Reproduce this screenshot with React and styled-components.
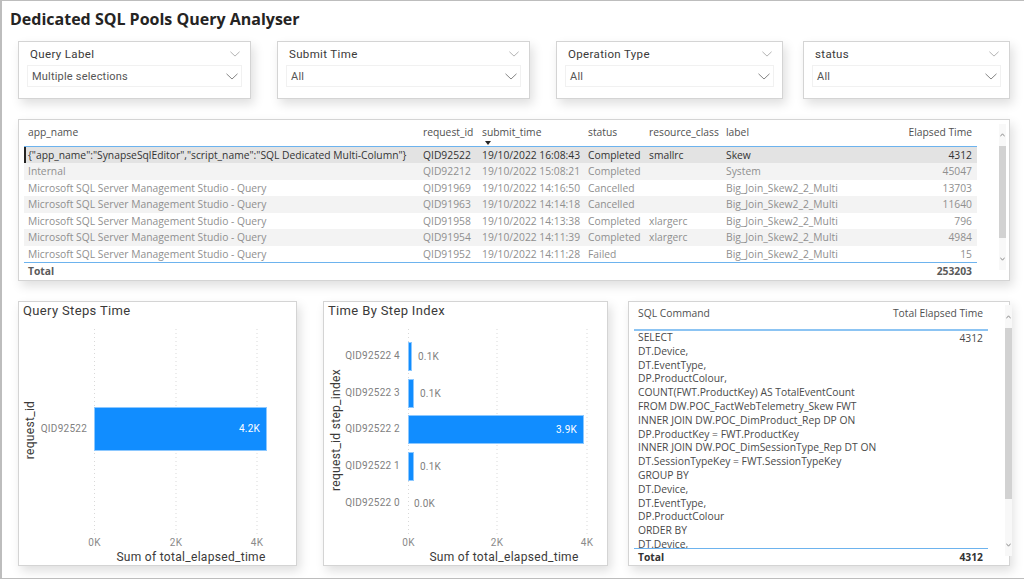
import React from 'react';
import styled, { createGlobalStyle } from 'styled-components';

const GlobalStyle = createGlobalStyle`
  html, body { margin: 0; padding: 0; background: #fff; }
  body { font-family: "Open Sans", "Liberation Sans", sans-serif; overflow: hidden; }
`;

const Page = styled.div`
  box-sizing: border-box;
  width: 1024px;
  height: 579px;
  background: #fff;
  border: 1px solid #bdbdbd;
  border-left-width: 2px;
  border-right: 0;
  padding-left: 16px;
  overflow: hidden;
`;

const Title = styled.h1`
  margin: 0 0 0 -8px;
  height: 40px;
  font-size: 16px;
  line-height: 36px;
  font-weight: 700;
  color: #252423;
`;

const Card = styled.div`
  box-sizing: border-box;
  background: #fff;
  border: 1px solid #d4d4d4;
  box-shadow: 3px 5px 10px rgba(0, 0, 0, 0.13);
`;

const SlicerRow = styled.div`
  display: flex;
  height: 78px;
`;

const SlicerCard = styled(Card)`
  width: ${p => p.$width}px;
  height: 58px;
  margin-right: ${p => p.$gap}px;
  padding: 0 8px;
`;

const SlicerHead = styled.div`
  display: flex;
  align-items: center;
  justify-content: space-between;
  height: 23px;
  padding: 0 2px 0 3px;
  font-family: Roboto, "Liberation Sans", sans-serif;
  font-size: 11.5px;
  letter-spacing: 0.35px;
  color: #3b3a39;
`;

const SlicerBox = styled.div`
  display: flex;
  align-items: center;
  justify-content: space-between;
  height: 22px;
  box-sizing: border-box;
  border: 1px solid #f1f1f1;
  padding: 0 3px 0 4px;
  font-family: Roboto, "Liberation Sans", sans-serif;
  font-size: 11px;
  letter-spacing: 0.2px;
  color: #555;
`;

const TableCard = styled(Card)`
  display: flex;
  width: 992px;
  height: 162px;
  padding-left: 5px;
`;

const TableMain = styled.div`
  width: 953px;
  flex: none;
`;

const DataRow = styled.div`
  display: grid;
  grid-template-columns: 395px 59px 106px 61px 77px 178px 77px;
  height: ${p => p.$h || 16.43}px;
  line-height: ${p => p.$h || 16.43}px;
  font-size: 10.3px;
  color: ${p => (p.$active ? '#333' : '#8f8f8f')};
  background: ${p => (p.$active ? '#e3e3e3' : p.$alt ? '#f3f3f3' : '#fff')};
  box-shadow: ${p => (p.$active ? 'inset 2px 0 0 #252423' : 'none')};
  white-space: nowrap;
`;

const HeadRow = styled(DataRow)`
  color: #505050;
  background: #fff;
  border-bottom: 1px solid #6db3ee;
  box-sizing: content-box;
  line-height: 25px;
`;

const TotalRow = styled(DataRow)`
  border-top: 1px solid #6db3ee;
  box-sizing: content-box;
  font-weight: 700;
  color: #5a5a5a;
`;

const Cell = styled.div`
  position: relative;
  padding: 0 ${p => (p.$right ? 5 : 0)}px 0 4px;
  text-align: ${p => (p.$right ? 'right' : 'left')};
`;

const SortCaret = styled.span`
  position: absolute;
  left: 7px;
  top: 21px;
  border: 3px solid transparent;
  border-top: 4px solid #252423;
  border-bottom: 0;
`;

const ScrollTrack = styled.div`
  display: flex;
  flex-direction: column;
  width: 7px;
  flex: none;
  margin: ${p => p.$top}px 0 0 ${p => p.$left}px;
  height: ${p => p.$height}px;
  background: #f8f8f8;
`;

const ScrollArrow = styled.div`
  display: flex;
  align-items: center;
  justify-content: center;
  height: ${p => p.$h}px;
  flex: none;
`;

const ScrollThumb = styled.div`
  height: ${p => p.$h}px;
  background: #d2d2d2;
  flex: none;
`;

const ScrollRest = styled.div`
  flex: 1;
`;

const BottomRow = styled.div`
  display: flex;
  margin-top: 20px;
`;

const ChartCard = styled(Card)`
  width: ${p => p.$width}px;
  height: 265px;
  margin-right: ${p => p.$gap}px;
`;

const ChartSvg = styled.svg`
  display: block;
  text {
    font-family: Roboto, "Liberation Sans", sans-serif;
  }
`;

const SqlCard = styled(Card)`
  display: flex;
  width: 382px;
  height: 265px;
  padding-left: 5px;
`;

const SqlMain = styled.div`
  width: 354px;
  flex: none;
`;

const SqlRow = styled.div`
  display: flex;
  justify-content: space-between;
  padding: 0 5px 0 4px;
  font-size: 10.3px;
  line-height: ${p => p.$lh}px;
  height: ${p => p.$h}px;
  color: ${p => p.$color};
  font-weight: ${p => (p.$bold ? 700 : 400)};
  border-top: ${p => (p.$topLine ? '1px solid #6db3ee' : '0')};
  border-bottom: ${p => (p.$bottomLine ? '2px solid #8cc4f3' : '0')};
  overflow: hidden;
`;

const SqlLines = styled.div`
  white-space: pre;
  line-height: 13.8px;
`;

const Chevron = ({ w = 11, color = '#777' }) => (
  <svg width={w} height={w / 2 + 1} viewBox="0 0 12 7" fill="none">
    <path d="M0.5 0.8 L6 6 L11.5 0.8" stroke={color} strokeWidth="0.9" />
  </svg>
);

const ArrowGlyph = ({ up }) => (
  <svg width="5" height="4" viewBox="0 0 5 4" fill="none">
    <path d={up ? 'M0.3 3.4 L2.5 0.8 L4.7 3.4' : 'M0.3 0.6 L2.5 3.2 L4.7 0.6'} stroke="#777" strokeWidth="0.8" />
  </svg>
);

const Scrollbar = ({ top, left, height, arrow, thumb }) => (
  <ScrollTrack $top={top} $left={left} $height={height}>
    <ScrollArrow $h={arrow}><ArrowGlyph up /></ScrollArrow>
    <ScrollThumb $h={thumb} />
    <ScrollRest />
    <ScrollArrow $h={22}><ArrowGlyph /></ScrollArrow>
  </ScrollTrack>
);

const slicers = [
  { label: 'Query Label', value: 'Multiple selections', width: 233, gap: 26 },
  { label: 'Submit Time', value: 'All', width: 253, gap: 26 },
  { label: 'Operation Type', value: 'All', width: 227, gap: 20 },
  { label: 'status', value: 'All', width: 207, gap: 0 },
];

const columns = ['app_name', 'request_id', 'submit_time', 'status', 'resource_class', 'label', 'Elapsed Time'];
const mgmt = 'Microsoft SQL Server Management Studio - Query';
const bigJoin = 'Big_Join_Skew2_2_Multi';

const rows = [
  ['{"app_name":"SynapseSqlEditor","script_name":"SQL Dedicated Multi-Column"}', 'QID92522', '19/10/2022 16:08:43', 'Completed', 'smallrc', 'Skew', '4312'],
  ['Internal', 'QID92212', '19/10/2022 15:08:21', 'Completed', '', 'System', '45047'],
  [mgmt, 'QID91969', '19/10/2022 14:16:50', 'Cancelled', '', bigJoin, '13703'],
  [mgmt, 'QID91963', '19/10/2022 14:14:18', 'Cancelled', '', bigJoin, '11640'],
  [mgmt, 'QID91958', '19/10/2022 14:13:38', 'Completed', 'xlargerc', bigJoin, '796'],
  [mgmt, 'QID91954', '19/10/2022 14:11:39', 'Completed', 'xlargerc', bigJoin, '4984'],
  [mgmt, 'QID91952', '19/10/2022 14:11:28', 'Failed', '', bigJoin, '15'],
];

const sqlText = `SELECT
DT.Device,
DT.EventType,
DP.ProductColour,
COUNT(FWT.ProductKey) AS TotalEventCount
FROM DW.POC_FactWebTelemetry_Skew FWT
INNER JOIN DW.POC_DimProduct_Rep DP ON
DP.ProductKey = FWT.ProductKey
INNER JOIN DW.POC_DimSessionType_Rep DT ON
DT.SessionTypeKey = FWT.SessionTypeKey
GROUP BY
DT.Device,
DT.EventType,
DP.ProductColour
ORDER BY
DT.Device,`;

// chart coords are relative to the card's inner box
const BarChart = ({ title, width, axisLabel, axisX, titleX, catX, grid, bars }) => (
  <ChartSvg width={width} height={263} viewBox={`0 0 ${width} 263`}>
    <text x={4} y={13} fontSize="13" letterSpacing="0.35" fill="#3b3a39">{title}</text>
    {grid.map(g => (
      <g key={g.label}>
        <line x1={g.x} x2={g.x} y1={27} y2={233} stroke="#d9d9d9" strokeWidth="1" strokeDasharray="1 3" />
        <text x={g.x} y={244} fontSize="10" letterSpacing="0.2" textAnchor="middle" fill="#8a8a8a">{g.label}</text>
      </g>
    ))}
    {bars.map(b => (
      <g key={b.cat}>
        <rect x={b.x + 0.5} y={b.y + 0.5} width={b.w} height={b.h} fill="#118dff" stroke="#8cc8ff" strokeWidth="1" />
        <text x={catX} y={b.y + b.h / 2 + 3} fontSize="10" letterSpacing="0.25" textAnchor="end" fill="#7f7f7f">{b.cat}</text>
        <text x={b.lx} y={b.y + b.h / 2 + (b.dy || 3.5)} fontSize="10" letterSpacing="0.2" textAnchor={b.inside ? 'end' : 'start'} fill={b.inside ? '#fff' : '#7f7f7f'}>{b.val}</text>
      </g>
    ))}
    <text
      transform={`translate(${axisX} 128) rotate(-90)`}
      fontSize="12" letterSpacing="0.3" textAnchor="middle" fill="#3b3a39"
    >{axisLabel}</text>
    <text x={titleX} y={259} fontSize="12" letterSpacing="0.3" textAnchor="middle" fill="#3b3a39">Sum of total_elapsed_time</text>
  </ChartSvg>
);

export default function App() {
  return (
    <Page>
      <GlobalStyle />
      <Title>Dedicated SQL Pools Query Analyser</Title>

      <SlicerRow>
        {slicers.map(s => (
          <SlicerCard key={s.label} $width={s.width} $gap={s.gap}>
            <SlicerHead>{s.label}<Chevron w={10} color="#999" /></SlicerHead>
            <SlicerBox>{s.value}<Chevron w={12} color="#777" /></SlicerBox>
          </SlicerCard>
        ))}
      </SlicerRow>

      <TableCard>
        <TableMain>
          <HeadRow $h={26}>
            {columns.map((c, i) => (
              <Cell key={c} $right={i === 6}>
                {c}
                {c === 'submit_time' && <SortCaret />}
              </Cell>
            ))}
          </HeadRow>
          {rows.map((r, i) => (
            <DataRow key={r[1]} $active={i === 0} $alt={i % 2 === 1}>
              {r.map((v, j) => <Cell key={j} $right={j === 6}>{v}</Cell>)}
            </DataRow>
          ))}
          <TotalRow $h={17}>
            <Cell>Total</Cell>
            <Cell /><Cell /><Cell /><Cell /><Cell />
            <Cell $right>253203</Cell>
          </TotalRow>
        </TableMain>
        <Scrollbar top={4} left={22} height={146} arrow={22} thumb={92} />
      </TableCard>

      <BottomRow>
        <ChartCard $width={279} $gap={26}>
          <BarChart
            title="Query Steps Time"
            width={277}
            axisLabel="request_id"
            axisX={15}
            titleX={172}
            catX={68}
            grid={[{ x: 75.5, label: '0K' }, { x: 157, label: '2K' }, { x: 238, label: '4K' }]}
            bars={[{ cat: 'QID92522', x: 75, y: 105, w: 172, h: 43, val: '4.2K', lx: 241, inside: true }]}
          />
        </ChartCard>
        <ChartCard $width={285} $gap={20}>
          <BarChart
            title="Time By Step Index"
            width={283}
            axisLabel="request_id step_index"
            axisX={16}
            titleX={180}
            catX={76}
            grid={[{ x: 84.5, label: '0K' }, { x: 173, label: '2K' }, { x: 263, label: '4K' }]}
            bars={[
              { cat: 'QID92522 4', x: 84, y: 40, w: 3, h: 28, val: '0.1K', lx: 94 },
              { cat: 'QID92522 3', x: 84, y: 77, w: 5, h: 28, val: '0.1K', lx: 96 },
              { cat: 'QID92522 2', x: 84, y: 113, w: 175, h: 28, val: '3.9K', lx: 253, inside: true },
              { cat: 'QID92522 1', x: 84, y: 150, w: 5, h: 28, val: '0.1K', lx: 96 },
              { cat: 'QID92522 0', x: 84, y: 187, w: 0, h: 28, val: '0.0K', lx: 90 },
            ]}
          />
        </ChartCard>
        <SqlCard>
          <SqlMain>
            <SqlRow $h={27} $lh={23} $color="#505050" $bottomLine>
              <span>SQL Command</span><span>Total Elapsed Time</span>
            </SqlRow>
            <SqlRow $h={217} $lh={14} $color="#4a4a4a">
              <SqlLines>{sqlText}</SqlLines><span>4312</span>
            </SqlRow>
            <SqlRow $h={17} $lh={17} $color="#333" $bold $topLine>
              <span>Total</span><span>4312</span>
            </SqlRow>
          </SqlMain>
          <Scrollbar top={3} left={17} height={251} arrow={23} thumb={171} />
        </SqlCard>
      </BottomRow>
    </Page>
  );
}
